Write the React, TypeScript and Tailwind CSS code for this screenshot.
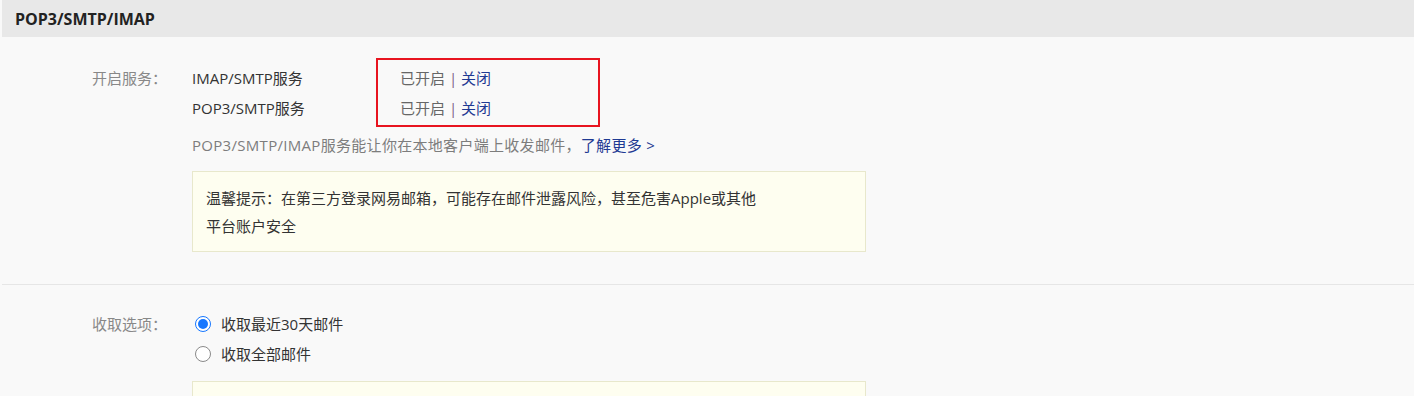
import React from "react";

const font = { fontFamily: "'Open Sans', 'Noto Sans CJK SC', sans-serif" };

function Radio({ checked, label }: { checked?: boolean; label: string }) {
  return (
    <label className="flex items-center h-[30px] text-[15px] text-[#333]">
      <span
        className={
          "ml-[3px] mr-[10px] w-[16px] h-[16px] rounded-full border flex items-center justify-center bg-white " +
          (checked ? "border-[#1677ff]" : "border-[#8a8a8a]")
        }
      >
        {checked && <span className="w-[10px] h-[10px] rounded-full bg-[#1677ff]" />}
      </span>
      {label}
    </label>
  );
}

export default function App() {
  return (
    <div className="w-[1414px] h-[396px] overflow-hidden bg-[#f9f9f9]" style={font}>
      <div className="ml-[2px]">
        <div className="h-[37px] bg-[#e8e8e8] flex items-center pl-[13px] text-[16px] font-bold text-[#222]">
          POP3/SMTP/IMAP
        </div>

        {/* services */}
        <div className="flex pl-[90px] pt-[26px] pb-[32px] border-b border-[#e6e6e6]">
          <div className="w-[100px] h-[30px] leading-[30px] text-[15px] text-[#888]">开启服务：</div>
          <div className="flex flex-col">
            <div className="flex">
              <div className="w-[184px] text-[15px] text-[#333] leading-[30px]">
                <div>IMAP/SMTP服务</div>
                <div>POP3/SMTP服务</div>
              </div>
              <div className="w-[224px] -mt-[5px] border-2 border-[#e8141f] pt-[3px] pb-[2px] px-[22px] text-[15px] leading-[30px]">
                <div>
                  <span className="text-[#666]">已开启</span>
                  <span className="text-[#7a5a8a]"> | </span>
                  <a className="text-[#1f3a93]">关闭</a>
                </div>
                <div>
                  <span className="text-[#666]">已开启</span>
                  <span className="text-[#7a5a8a]"> | </span>
                  <a className="text-[#1f3a93]">关闭</a>
                </div>
              </div>
            </div>
            <div className="mt-[3px] h-[30px] leading-[30px] text-[15px] text-[#7d7d7d] tracking-[0.3px]">
              POP3/SMTP/IMAP服务能让你在本地客户端上收发邮件，
              <a className="text-[#1f3a93]">了解更多 &gt;</a>
            </div>
            <div className="mt-[11px] w-[674px] border border-[#e8e8cc] bg-[#fefef0] pl-[13px] pt-[12px] pb-[11px] text-[15px] leading-[28px] text-[#333]">
              温馨提示：在第三方登录网易邮箱，可能存在邮件泄露风险，甚至危害Apple或其他
              <br />
              平台账户安全
            </div>
          </div>
        </div>

        {/* receive options */}
        <div className="flex pl-[90px] pt-[24px]">
          <div className="w-[100px] h-[30px] leading-[30px] text-[15px] text-[#888]">收取选项：</div>
          <div className="flex flex-col">
            <Radio checked label="收取最近30天邮件" />
            <Radio label="收取全部邮件" />
            <div className="mt-[12px] w-[674px] h-[60px] border border-[#e8e8cc] bg-[#fefef0]" />
          </div>
        </div>
      </div>
    </div>
  );
}
